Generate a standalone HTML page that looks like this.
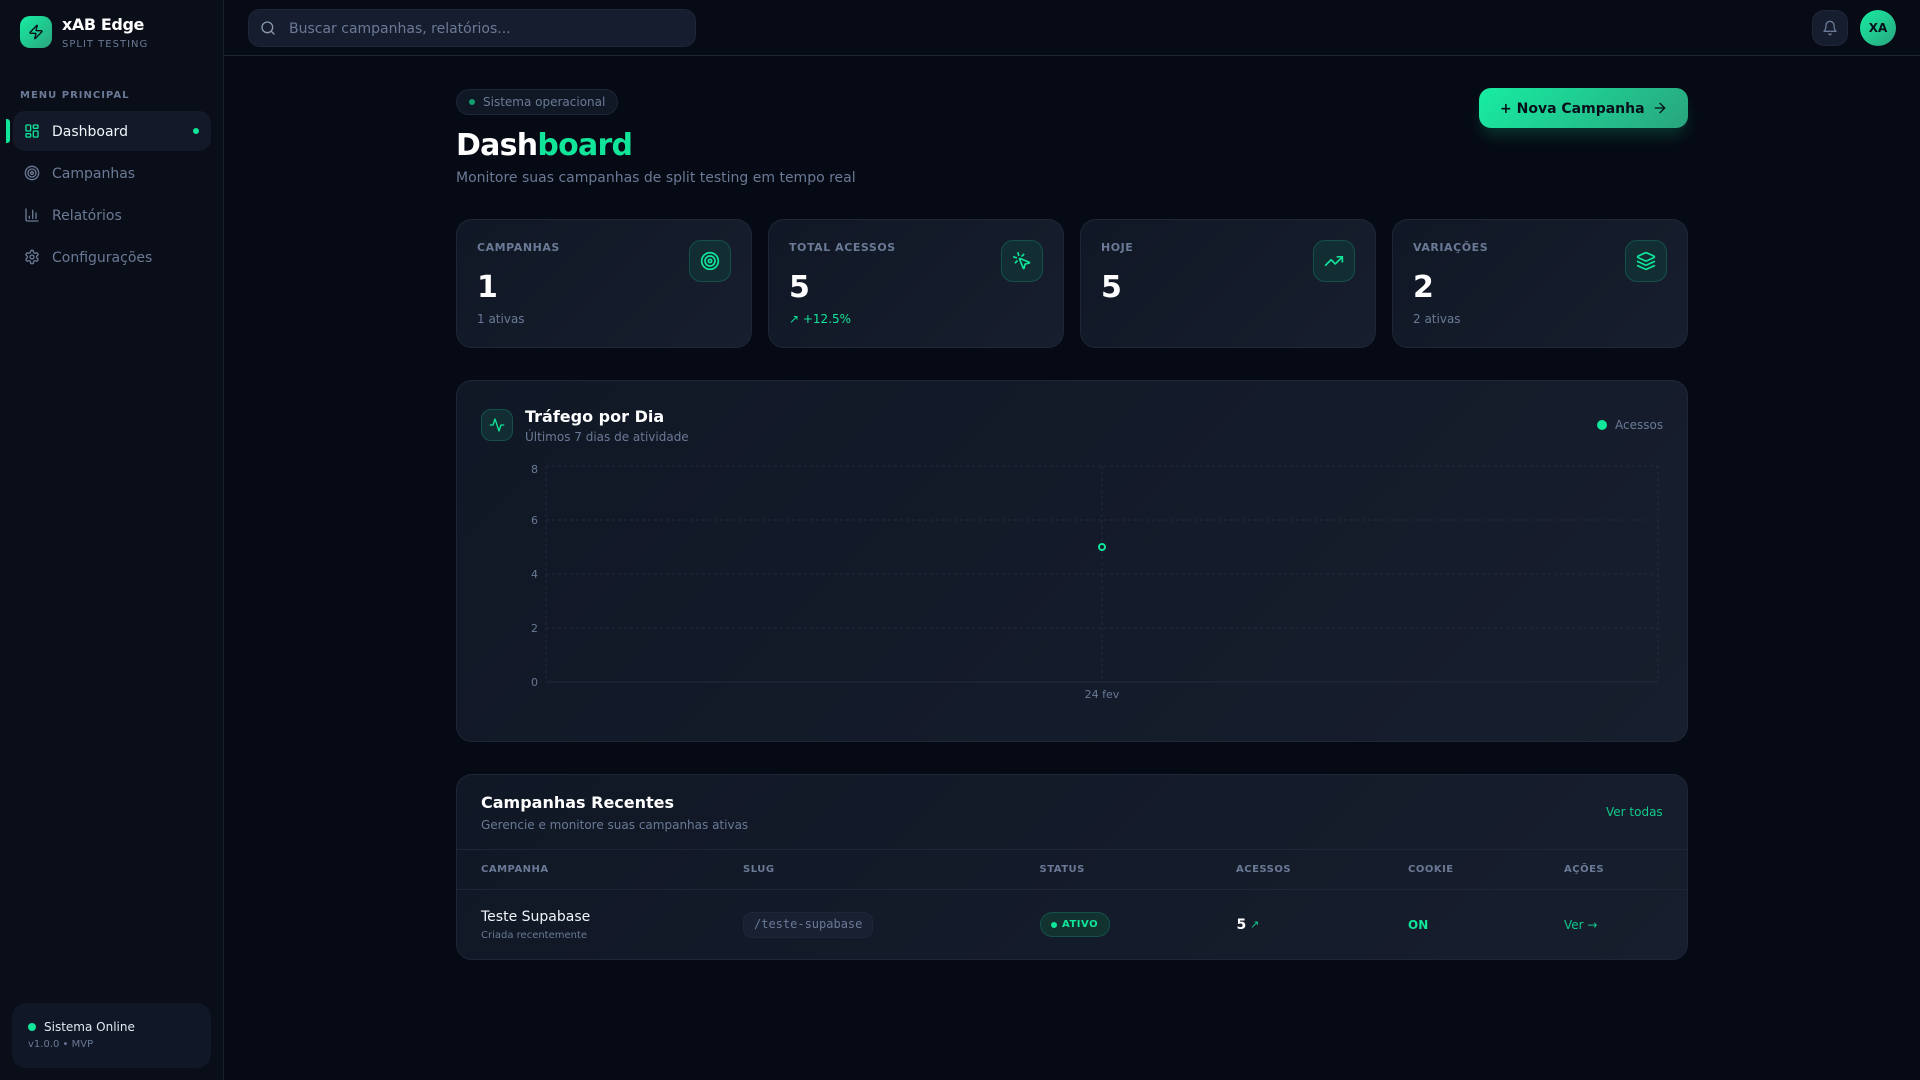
<!DOCTYPE html>
<html lang="pt-BR">
<head>
<meta charset="utf-8">
<title>xAB Edge</title>
<style>
*{box-sizing:border-box;margin:0;padding:0}
html,body{width:1920px;height:1080px;overflow:hidden;background:#060a14;font-family:"DejaVu Sans",sans-serif}
.a{position:absolute;white-space:nowrap}
svg{display:block;fill:none;stroke-linecap:round;stroke-linejoin:round}
#sidebar{left:0;top:0;width:224px;height:1080px;background:#0a0e18;border-right:1px solid #1a2030}
#topbar{left:224px;top:0;width:1696px;height:56px;border-bottom:1px solid #1d2433;background:#070b15}
.card{background:linear-gradient(135deg,#101725,#171e2d);border:1px solid #1e2637}
.ib{background:#132e33;border:1px solid #14514a;border-radius:12px;display:flex;align-items:center;justify-content:center}
.lbl{font-size:11px;font-weight:700;letter-spacing:.55px;color:#6a7a96;line-height:14px}
.val{font-size:30px;font-weight:700;color:#fff;line-height:36px}
.sub{font-size:12px;color:#6a7a96;line-height:16px}
.nav{font-size:14px;line-height:20px;color:#6a7a96}
.th{font-size:10px;font-weight:700;letter-spacing:.5px;color:#6a7a96;line-height:14px}
.g{color:#10e59a}
</style>
</head>
<body>
<div id="sidebar" class="a"></div>
<div id="topbar" class="a"></div>

<div class="a" style="left:20px;top:16px;width:32px;height:32px;border-radius:10px;background:linear-gradient(135deg,#17eda2,#2aa47e);display:flex;align-items:center;justify-content:center">
<svg width="16" height="16" viewBox="0 0 24 24" stroke="#07101a" stroke-width="2"><path d="M4 14a1 1 0 0 1-.78-1.63l9.9-10.2a.5.5 0 0 1 .86.46l-1.92 6.02A1 1 0 0 0 13 10h7a1 1 0 0 1 .78 1.63l-9.9 10.2a.5.5 0 0 1-.86-.46l1.92-6.02A1 1 0 0 0 11 14z"/></svg></div>
<div class="a" style="left:62px;top:15px;font-size:16px;font-weight:700;letter-spacing:-.4px;color:#fff;line-height:20px">xAB Edge</div>
<div class="a" style="left:62px;top:38px;font-size:10px;letter-spacing:1px;color:#6a7a96;line-height:14px">SPLIT TESTING</div>
<div class="a" style="left:20px;top:89px;font-size:10px;font-weight:700;letter-spacing:1px;color:#6a7a96;line-height:14px">MENU PRINCIPAL</div>

<div class="a" style="left:6px;top:119px;width:4px;height:24px;border-radius:0 3px 3px 0;background:#10e59a"></div>
<div class="a" style="left:12.5px;top:111px;width:198.5px;height:40px;border-radius:12px;background:#131928"></div>
<svg class="a" style="left:24px;top:123px" width="16" height="16" viewBox="0 0 24 24" stroke="#10e59a" stroke-width="2"><rect x="3" y="3" width="7" height="9" rx="1"/><rect x="14" y="3" width="7" height="5" rx="1"/><rect x="14" y="12" width="7" height="9" rx="1"/><rect x="3" y="16" width="7" height="5" rx="1"/></svg>
<div class="a nav" style="left:52px;top:122px;color:#f1f5f9">Dashboard</div>
<div class="a" style="left:193px;top:128px;width:6px;height:6px;border-radius:50%;background:#10e59a"></div>

<svg class="a" style="left:24px;top:165px" width="16" height="16" viewBox="0 0 24 24" stroke="#6a7a96" stroke-width="2"><circle cx="12" cy="12" r="10"/><circle cx="12" cy="12" r="6"/><circle cx="12" cy="12" r="2"/></svg>
<div class="a nav" style="left:52px;top:164px">Campanhas</div>
<svg class="a" style="left:24px;top:207px" width="16" height="16" viewBox="0 0 24 24" stroke="#6a7a96" stroke-width="2"><path d="M3 3v16a2 2 0 0 0 2 2h16"/><path d="M18 17V9"/><path d="M13 17V5"/><path d="M8 17v-3"/></svg>
<div class="a nav" style="left:52px;top:206px">Relatórios</div>
<svg class="a" style="left:24px;top:249px" width="16" height="16" viewBox="0 0 24 24" stroke="#6a7a96" stroke-width="2"><path d="M12.22 2h-.44a2 2 0 0 0-2 2v.18a2 2 0 0 1-1 1.73l-.43.25a2 2 0 0 1-2 0l-.15-.08a2 2 0 0 0-2.73.73l-.22.38a2 2 0 0 0 .73 2.73l.15.1a2 2 0 0 1 1 1.72v.51a2 2 0 0 1-1 1.74l-.15.09a2 2 0 0 0-.73 2.73l.22.38a2 2 0 0 0 2.73.73l.15-.08a2 2 0 0 1 2 0l.43.25a2 2 0 0 1 1 1.73V20a2 2 0 0 0 2 2h.44a2 2 0 0 0 2-2v-.18a2 2 0 0 1 1-1.73l.43-.25a2 2 0 0 1 2 0l.15.08a2 2 0 0 0 2.73-.73l.22-.39a2 2 0 0 0-.73-2.73l-.15-.08a2 2 0 0 1-1-1.74v-.5a2 2 0 0 1 1-1.74l.15-.09a2 2 0 0 0 .73-2.73l-.22-.38a2 2 0 0 0-2.73-.73l-.15.08a2 2 0 0 1-2 0l-.43-.25a2 2 0 0 1-1-1.73V4a2 2 0 0 0-2-2z"/><circle cx="12" cy="12" r="3"/></svg>
<div class="a nav" style="left:52px;top:248px">Configurações</div>

<div class="a" style="left:12px;top:1003px;width:199px;height:65px;border-radius:14px;background:#101726"></div>
<div class="a" style="left:28px;top:1023px;width:8px;height:8px;border-radius:50%;background:#10e59a"></div>
<div class="a" style="left:44px;top:1019px;font-size:12px;color:#e2e8f0;line-height:16px">Sistema Online</div>
<div class="a" style="left:28px;top:1038px;font-size:10px;color:#6a7a96;line-height:14px">v1.0.0 • MVP</div>

<!-- topbar -->
<div class="a" style="left:248px;top:9px;width:448px;height:38px;border-radius:12px;background:#161d2e;border:1px solid #1e2637"></div>
<svg class="a" style="left:260px;top:20px" width="16" height="16" viewBox="0 0 24 24" stroke="#8a98ae" stroke-width="2"><circle cx="11" cy="11" r="8"/><path d="m21 21-4.3-4.3"/></svg>
<div class="a" style="left:289px;top:18px;font-size:14px;color:#6a7a96;line-height:20px;padding-top:1px">Buscar campanhas, relatórios...</div>
<div class="a" style="left:1812px;top:10px;width:36px;height:36px;border-radius:12px;background:#161d2e;border:1px solid #1e2637;display:flex;align-items:center;justify-content:center">
<svg width="16" height="16" viewBox="0 0 24 24" stroke="#6a7a96" stroke-width="2"><path d="M6 8a6 6 0 0 1 12 0c0 7 3 9 3 9H3s3-2 3-9"/><path d="M10.3 21a1.94 1.94 0 0 0 3.4 0"/></svg></div>
<div class="a" style="left:1860px;top:10px;width:36px;height:36px;border-radius:50%;background:linear-gradient(135deg,#17eda2,#2aa47e);display:flex;align-items:center;justify-content:center;font-size:12px;font-weight:700;color:#07101a">XA</div>

<!-- header -->
<div class="a" style="left:456px;top:89px;width:162px;height:26px;border-radius:13px;background:#101725;border:1px solid #1e2637"></div>
<div class="a" style="left:469px;top:99px;width:6px;height:6px;border-radius:50%;background:#0f9d6d"></div>
<div class="a" style="left:483px;top:94px;font-size:12px;color:#6a7a96;line-height:16px">Sistema operacional</div>
<div class="a" style="left:456px;top:127.6px;font-size:30px;font-weight:700;letter-spacing:-.75px;color:#fff;line-height:36px">Dash<span class="g">board</span></div>
<div class="a" style="left:456px;top:168px;font-size:14px;color:#6a7a96;line-height:20px">Monitore suas campanhas de split testing em tempo real</div>
<div class="a" style="left:1479px;top:88px;width:209px;height:40px;border-radius:12px;background:linear-gradient(135deg,#17eda2,#2aa47e);box-shadow:0 10px 15px -3px rgba(16,229,154,.2)"></div>
<div class="a" style="left:1500px;top:99px;font-size:14px;font-weight:700;color:#07101a;line-height:20px">+ Nova Campanha</div>
<svg class="a" style="left:1652px;top:100px" width="16" height="16" viewBox="0 0 24 24" stroke="#07101a" stroke-width="2"><path d="M5 12h14"/><path d="m12 5 7 7-7 7"/></svg>

<!-- stats -->
<div class="a card" style="left:456px;top:219px;width:296px;height:129px;border-radius:16px"></div>
<div class="a card" style="left:768px;top:219px;width:296px;height:129px;border-radius:16px"></div>
<div class="a card" style="left:1080px;top:219px;width:296px;height:129px;border-radius:16px"></div>
<div class="a card" style="left:1392px;top:219px;width:296px;height:129px;border-radius:16px"></div>

<div class="a lbl" style="left:477px;top:241px">CAMPANHAS</div>
<div class="a val" style="left:477px;top:270px">1</div>
<div class="a sub" style="left:477px;top:311px">1 ativas</div>
<div class="a ib" style="left:689px;top:240px;width:42px;height:42px"><svg width="20" height="20" viewBox="0 0 24 24" stroke="#10e59a" stroke-width="2"><circle cx="12" cy="12" r="10"/><circle cx="12" cy="12" r="6"/><circle cx="12" cy="12" r="2"/></svg></div>

<div class="a lbl" style="left:789px;top:241px">TOTAL ACESSOS</div>
<div class="a val" style="left:789px;top:270px">5</div>
<div class="a sub g" style="left:789px;top:311px;color:#10e59a">↗ +12.5%</div>
<div class="a ib" style="left:1001px;top:240px;width:42px;height:42px"><svg width="20" height="20" viewBox="0 0 24 24" stroke="#10e59a" stroke-width="2"><path d="M14 4.1 12 6"/><path d="m5.1 8-2.9-.8"/><path d="m6 12-1.9 2"/><path d="M7.2 2.2 8 5.1"/><path d="M9.037 9.69a.498.498 0 0 1 .653-.653l11 4.5a.5.5 0 0 1-.074.949l-4.349 1.041a1 1 0 0 0-.74.739l-1.04 4.35a.5.5 0 0 1-.95.074z"/></svg></div>

<div class="a lbl" style="left:1101px;top:241px">HOJE</div>
<div class="a val" style="left:1101px;top:270px">5</div>
<div class="a ib" style="left:1313px;top:240px;width:42px;height:42px"><svg width="20" height="20" viewBox="0 0 24 24" stroke="#10e59a" stroke-width="2"><polyline points="22 7 13.5 15.5 8.5 10.5 2 17"/><polyline points="16 7 22 7 22 13"/></svg></div>

<div class="a lbl" style="left:1413px;top:241px">VARIAÇÕES</div>
<div class="a val" style="left:1413px;top:270px">2</div>
<div class="a sub" style="left:1413px;top:311px">2 ativas</div>
<div class="a ib" style="left:1625px;top:240px;width:42px;height:42px"><svg width="20" height="20" viewBox="0 0 24 24" stroke="#10e59a" stroke-width="2"><path d="M12.83 2.18a2 2 0 0 0-1.66 0L2.6 6.08a1 1 0 0 0 0 1.83l8.58 3.91a2 2 0 0 0 1.66 0l8.58-3.9a1 1 0 0 0 0-1.83Z"/><path d="M22 17.65l-9.17 4.16a2 2 0 0 1-1.66 0L2 17.65"/><path d="M22 12.65l-9.17 4.16a2 2 0 0 1-1.66 0L2 12.65"/></svg></div>

<!-- chart -->
<div class="a card" style="left:456px;top:380px;width:1232px;height:362px;border-radius:16px"></div>
<div class="a ib" style="left:481px;top:409px;width:32px;height:32px;border-radius:10px"><svg width="16" height="16" viewBox="0 0 24 24" stroke="#10e59a" stroke-width="2"><path d="M22 12h-4l-3 9L9 3l-3 9H2"/></svg></div>
<div class="a" style="left:525px;top:407px;font-size:16px;font-weight:700;color:#fff;line-height:20px">Tráfego por Dia</div>
<div class="a sub" style="left:525px;top:429px">Últimos 7 dias de atividade</div>
<div class="a" style="left:1597px;top:420px;width:10px;height:10px;border-radius:50%;background:#10e59a"></div>
<div class="a sub" style="left:1615px;top:417px">Acessos</div>

<svg class="a" style="left:456px;top:380px" width="1232" height="362" viewBox="456 380 1232 362">
<g stroke="#232b3c" stroke-width="1" stroke-dasharray="3 3" stroke-linecap="butt">
<path d="M546 466H1658M546 520H1658M546 574H1658M546 628H1658"/>
<path d="M546 466V682M1102 466V682M1658 466V682"/>
</g>
<path d="M546 682H1658" stroke="#232b3c" stroke-width="1" stroke-linecap="butt"/>
<circle cx="1102" cy="547" r="3" fill="#141b2a" stroke="#10e59a" stroke-width="2"/>
<g font-family="DejaVu Sans" font-size="11" fill="#6a7a96" text-anchor="end">
<text x="538" y="473">8</text><text x="538" y="524">6</text><text x="538" y="578">4</text><text x="538" y="632">2</text><text x="538" y="686">0</text>
</g>
<text x="1102" y="698" font-family="DejaVu Sans" font-size="11" fill="#6a7a96" text-anchor="middle">24 fev</text>
</svg>

<!-- table -->
<div class="a card" style="left:456px;top:774px;width:1232px;height:186px;border-radius:16px"></div>
<div class="a" style="left:457px;top:849px;width:1230px;height:1px;background:#1e2637"></div>
<div class="a" style="left:457px;top:889px;width:1230px;height:1px;background:#1e2637"></div>
<div class="a" style="left:481px;top:793px;font-size:16px;font-weight:700;color:#fff;line-height:20px">Campanhas Recentes</div>
<div class="a sub" style="left:481px;top:817px">Gerencie e monitore suas campanhas ativas</div>
<div class="a sub g" style="left:1606px;top:804px;color:#10c98a">Ver todas</div>

<div class="a th" style="left:481px;top:863px">CAMPANHA</div>
<div class="a th" style="left:743px;top:863px">SLUG</div>
<div class="a th" style="left:1039.5px;top:863px">STATUS</div>
<div class="a th" style="left:1236px;top:863px">ACESSOS</div>
<div class="a th" style="left:1408px;top:863px">COOKIE</div>
<div class="a th" style="left:1564px;top:863px">AÇÕES</div>

<div class="a" style="left:481px;top:907px;font-size:14px;color:#f1f5f9;line-height:20px">Teste Supabase</div>
<div class="a" style="left:481px;top:929px;font-size:10px;color:#6a7a96;line-height:14px">Criada recentemente</div>
<div class="a" style="left:743px;top:912px;width:130px;height:26px;border-radius:9px;background:#182032;border:1px solid #1e2637"></div>
<div class="a" style="left:754px;top:916px;font-family:'DejaVu Sans Mono',monospace;font-size:12px;color:#6a7a96;line-height:16px">/teste-supabase</div>
<div class="a" style="left:1040px;top:912px;width:70px;height:25px;border-radius:13px;background:#11322f;border:1px solid #14514a"></div>
<div class="a" style="left:1051px;top:922px;width:6px;height:6px;border-radius:50%;background:#10e59a"></div>
<div class="a g" style="left:1062px;top:918px;font-size:10px;font-weight:700;letter-spacing:.5px;line-height:14px">ATIVO</div>
<div class="a" style="left:1236.5px;top:915px;font-size:14px;font-weight:700;color:#fff;line-height:20px">5</div>
<div class="a g" style="left:1250px;top:918px;font-size:11px;line-height:14px;color:#10c98a">↗</div>
<div class="a g" style="left:1408px;top:917px;font-size:12px;font-weight:700;line-height:16px">ON</div>
<div class="a g" style="left:1564px;top:917px;font-size:12px;line-height:16px;color:#10c98a">Ver →</div>
</body>
</html>
